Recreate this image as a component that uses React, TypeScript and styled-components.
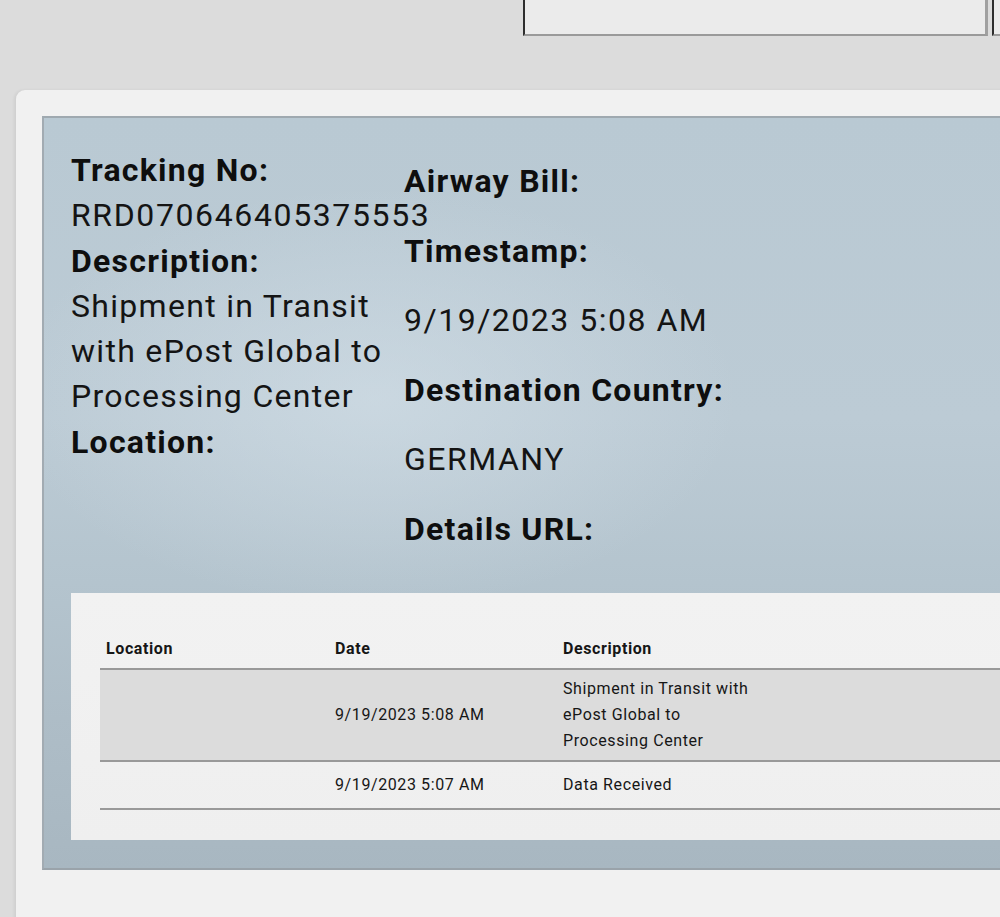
import React from "react";
import styled, { createGlobalStyle } from "styled-components";

const GlobalStyle = createGlobalStyle`
  html, body {
    margin: 0;
    padding: 0;
    background: #dcdcdc;
  }
  body {
    font-family: Roboto, "Liberation Sans", Arial, sans-serif;
    color: #111;
  }
`;

const Page = styled.div`
  width: 1000px;
  height: 917px;
  overflow: hidden;
  background: #dcdcdc;
`;

const TopBar = styled.div`
  display: flex;
  justify-content: flex-start;
  padding-left: 523px;
  gap: 4px;
  height: 36px;
`;

const TopBox = styled.div<{ $w: number }>`
  flex: 0 0 ${(p) => p.$w}px;
  height: 34px;
  background: #ebebeb;
  border-left: 2px solid #2e2e2e;
  border-right: 3px solid #a0a0a0;
  border-bottom: 2px solid #9a9a9a;
  box-sizing: content-box;
`;

const Card = styled.div`
  margin: 54px 0 0 16px;
  width: 1100px;
  height: 900px;
  background: #f1f1f1;
  border-radius: 9px 0 0 0;
  padding: 26px 0 0 26px;
  box-sizing: border-box;
  box-shadow: -2px 0 3px rgba(0, 0, 0, 0.06);
`;

const Panel = styled.section`
  border-top: 2px solid #9fa9b0;
  border-left: 2px solid #a2abb2;
  border-bottom: 2px solid #9aa3aa;
  background:
    radial-gradient(ellipse 520px 300px at 330px 280px, rgba(214, 226, 234, 0.55), rgba(214, 226, 234, 0) 70%),
    linear-gradient(180deg, #b9c9d3 0%, #bccbd5 40%, #b4c4ce 62%, #aebdc7 80%, #a8b7c1 100%);
  padding: 30px 0 27px 27px;
  box-sizing: border-box;
  height: 754px;
`;

const InfoGrid = styled.div`
  display: grid;
  grid-template-columns: 333px 1fr;
  height: 445px;
`;

const Column = styled.div<{ $offset?: number }>`
  display: flex;
  flex-direction: column;
  padding-top: ${(p) => p.$offset ?? 0}px;
`;

const Label = styled.div<{ $spaced?: boolean }>`
  font-family: Roboto, "Liberation Sans", Arial, sans-serif;
  font-weight: 700;
  font-size: 32px;
  line-height: ${(p) => (p.$spaced ? "45.6px" : "45.3px")};
  letter-spacing: 1.25px;
  color: #0e0e0e;
  margin-bottom: ${(p) => (p.$spaced ? "24px" : "0")};
  white-space: nowrap;
`;

const Value = styled.div<{ $spaced?: boolean }>`
  font-family: Roboto, "Liberation Sans", Arial, sans-serif;
  font-weight: 400;
  font-size: 32px;
  line-height: ${(p) => (p.$spaced ? "45.6px" : "45.3px")};
  letter-spacing: ${(p) => (p.$spaced ? "1.5px" : "1.3px")};
  color: #141414;
  margin-bottom: ${(p) => (p.$spaced ? "24px" : "0")};
  white-space: nowrap;
`;

const Serial = styled(Value)`
  letter-spacing: 1.62px;
`;

const TableCard = styled.div`
  background: linear-gradient(180deg, #f2f2f2 0%, #efefef 100%);
  padding: 37px 0 29px 29px;
  box-sizing: border-box;
  height: 247px;
`;

const Table = styled.table`
  border-collapse: collapse;
  table-layout: fixed;
  width: 1000px;
  font-family: Roboto, "Liberation Sans", Arial, sans-serif;
  font-size: 16px;
  letter-spacing: 0.6px;
  color: #161616;
`;

const Col = styled.col<{ $w: number }>`
  width: ${(p) => p.$w}px;
`;

const Th = styled.th`
  text-align: left;
  font-weight: 700;
  padding: 6px 6px;
  line-height: 26px;
  border-bottom: 2px solid #999;
`;

const Row = styled.tr<{ $alt?: boolean }>`
  background: ${(p) => (p.$alt ? "#dcdcdc" : "transparent")};
  border-bottom: 2px solid #999;
`;

const Td = styled.td`
  padding: 6px 6px;
  line-height: 26px;
  height: 34px;
  vertical-align: middle;
`;

const Desc = styled.div`
  width: 192px;
`;

export default function App() {
  return (
    <Page>
      <GlobalStyle />
      <TopBar>
        <TopBox $w={460} />
        <TopBox $w={200} />
      </TopBar>
      <Card>
        <Panel>
          <InfoGrid>
            <Column>
              <Label>Tracking No:</Label>
              <Serial>RRD070646405375553</Serial>
              <Label>Description:</Label>
              <Value>Shipment in Transit</Value>
              <Value>with ePost Global to</Value>
              <Value>Processing Center</Value>
              <Label>Location:</Label>
            </Column>
            <Column $offset={11}>
              <Label $spaced>Airway Bill:</Label>
              <Label $spaced>Timestamp:</Label>
              <Value $spaced>9/19/2023 5:08 AM</Value>
              <Label $spaced>Destination Country:</Label>
              <Value $spaced>GERMANY</Value>
              <Label $spaced>Details URL:</Label>
            </Column>
          </InfoGrid>
          <TableCard>
            <Table>
              <colgroup>
                <Col $w={229} />
                <Col $w={228} />
                <Col $w={228} />
                <Col $w={315} />
              </colgroup>
              <thead>
                <tr>
                  <Th>Location</Th>
                  <Th>Date</Th>
                  <Th>Description</Th>
                  <Th />
                </tr>
              </thead>
              <tbody>
                <Row $alt>
                  <Td></Td>
                  <Td>9/19/2023 5:08 AM</Td>
                  <Td>
                    <Desc>Shipment in Transit with ePost Global to Processing Center</Desc>
                  </Td>
                  <Td></Td>
                </Row>
                <Row>
                  <Td></Td>
                  <Td>9/19/2023 5:07 AM</Td>
                  <Td>Data Received</Td>
                  <Td></Td>
                </Row>
              </tbody>
            </Table>
          </TableCard>
        </Panel>
      </Card>
    </Page>
  );
}
